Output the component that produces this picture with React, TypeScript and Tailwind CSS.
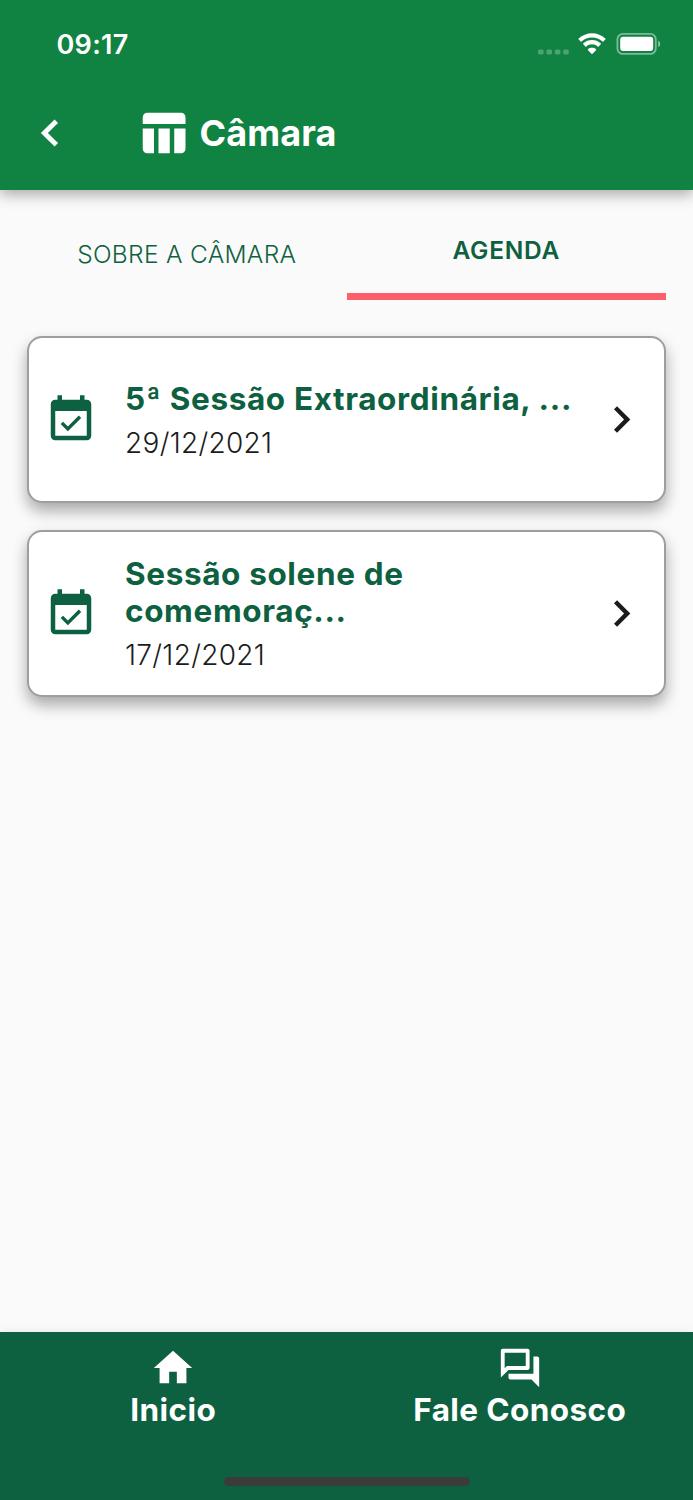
import {
  MdChevronRight,
  MdEventAvailable,
  MdHome,
  MdOutlineForum,
  MdTableChart,
} from 'react-icons/md'

const sessions = [
  { id: '1', lines: ['5ª Sessão Extraordinária, ...'], date: '29/12/2021' },
  { id: '2', lines: ['Sessão solene de', 'comemoraç...'], date: '17/12/2021' },
]

function StatusBar() {
  return (
    <div className="flex h-[88px] items-center justify-between pl-[56.5px] pr-[32.5px]">
      <span className="text-[27px] font-semibold leading-none tracking-[0.3px]">09:17</span>
      <div className="flex items-center">
        <svg width="31" height="6" viewBox="0 0 31 6" className="mt-[15px] fill-white/25">
          <rect x="0" y="0.4" width="5.6" height="5.2" rx="1.6" />
          <rect x="8.4" y="0.4" width="5.6" height="5.2" rx="1.6" />
          <rect x="16.8" y="0.4" width="5.6" height="5.2" rx="1.6" />
          <rect x="25.2" y="0.4" width="5.6" height="5.2" rx="1.6" />
        </svg>
        <svg width="30" height="22" viewBox="0 0 30 22" className="ml-[8px] fill-white">
          <path d="M15 4.5c4 0 7.6 1.5 10.4 4.1.3.3.6.3.9 0l2-2c.3-.3.3-.7 0-1C24.7 2.2 20 .3 15 .3S5.3 2.2 1.7 5.6c-.3.3-.3.7 0 1l2 2c.3.3.6.3.9 0C7.4 6 11 4.5 15 4.5z" />
          <path d="M15 11.2c2.2 0 4.2.8 5.7 2.2.3.3.7.3 1 0l2-2.1c.3-.3.3-.7 0-1C21.3 8.2 18.3 7 15 7s-6.3 1.2-8.7 3.3c-.3.3-.3.7 0 1l2 2.1c.3.3.7.3 1 0 1.5-1.4 3.5-2.2 5.700-2.200z" />
          <path d="M19 17.2c.3-.3.3-.7 0-1-1.1-.9-2.5-1.4-4-1.4s-2.900.5-4 1.400c-.3.3-.3.7 0 1l3.500 3.600c.3.3.7.3 1 0z" />
        </svg>
        <svg width="45" height="22" viewBox="0 0 45 22" className="ml-[9px]">
          <rect x="1.4" y="0.9" width="38.4" height="20" rx="5.5" className="fill-none stroke-white/45" strokeWidth="1.8" />
          <rect x="4.2" y="3.8" width="33" height="14.3" rx="3" className="fill-white" />
          <path d="M42.2 7.8c1.3.5 1.9 1.7 1.9 3.1s-.6 2.6-1.9 3.1z" className="fill-white/55" />
        </svg>
      </div>
    </div>
  )
}

function Header() {
  return (
    <header className="h-[190px] bg-[#108342] text-white shadow-[0_4px_14px_rgba(0,0,0,0.35)]">
      <StatusBar />
      <div className="flex h-[90px] items-center pl-[23px]">
        <svg width="54" height="54" viewBox="0 0 24 24" className="fill-none stroke-white">
          <path d="M14.8 6.8 9.5 12l5.3 5.2" strokeWidth="2.2" />
        </svg>
        <MdTableChart className="ml-[59px] size-[54px]" />
        <h1 className="ml-[9.5px] text-[36px] font-bold leading-none tracking-[0.1px]">Câmara</h1>
      </div>
    </header>
  )
}

function Tabs() {
  return (
    <div className="grid h-[110px] grid-cols-2 px-[27px] text-[#0e6140]">
      <button className="flex items-center justify-center pt-[18px] text-[24.5px] font-light tracking-[0.3px]">
        SOBRE A CÂMARA
      </button>
      <button className="flex items-center justify-center border-b-[7px] border-[#fc5f6a] pt-[18px] text-[24.5px] font-semibold tracking-[0.7px]">
        AGENDA
      </button>
    </div>
  )
}

export default function App() {
  return (
    <div className="flex h-[1500px] w-[693px] flex-col overflow-hidden bg-[#fafafa] font-[Inter,'Liberation_Sans',sans-serif]">
      <Header />
      <Tabs />

      <main className="flex grow flex-col gap-[27px] px-[27px] pt-[36px]">
        {sessions.map((session) => (
          <article
            key={session.id}
            className="flex h-[167px] items-center rounded-[15px] border-2 border-[#9e9e9e] bg-white pl-[15px] pr-[16px] shadow-[0_8px_15px_rgba(0,0,0,0.33)]"
          >
            <MdEventAvailable className="size-[54px] shrink-0 text-[#0e6140]" />
            <div className="ml-[27px] grow whitespace-nowrap pt-px">
              <h2 className="text-[31.5px] font-bold leading-[37px] tracking-[0.63px] text-[#0e6140]">
                {session.lines.map((line) => (
                  <span key={line} className="block">{line}</span>
                ))}
              </h2>
              <p className="mt-[8px] text-[28px] font-light leading-[36px] tracking-[0.3px] text-[#1c1c1c]">{session.date}</p>
            </div>
            <MdChevronRight className="size-[53px] shrink-0 text-[#1c1c1c]" />
          </article>
        ))}
      </main>

      <footer className="flex h-[168px] flex-col items-center justify-between bg-[#0e6140] pb-[14px] text-white shadow-[0_0_10px_rgba(0,0,0,0.08)]">
        <nav className="grid w-full grid-cols-2 pt-[13px]">
          <a className="flex flex-col items-center">
            <MdHome className="size-[46px]" />
            <span className="text-[31.5px] font-bold leading-[38px] tracking-[0.4px]">Inicio</span>
          </a>
          <a className="flex flex-col items-center">
            <MdOutlineForum className="size-[46px]" />
            <span className="text-[31.5px] font-bold leading-[38px] tracking-[0.4px]">Fale Conosco</span>
          </a>
        </nav>
        <div className="h-[9px] w-[246px] rounded-full bg-[#3b3b3b]" />
      </footer>
    </div>
  )
}
